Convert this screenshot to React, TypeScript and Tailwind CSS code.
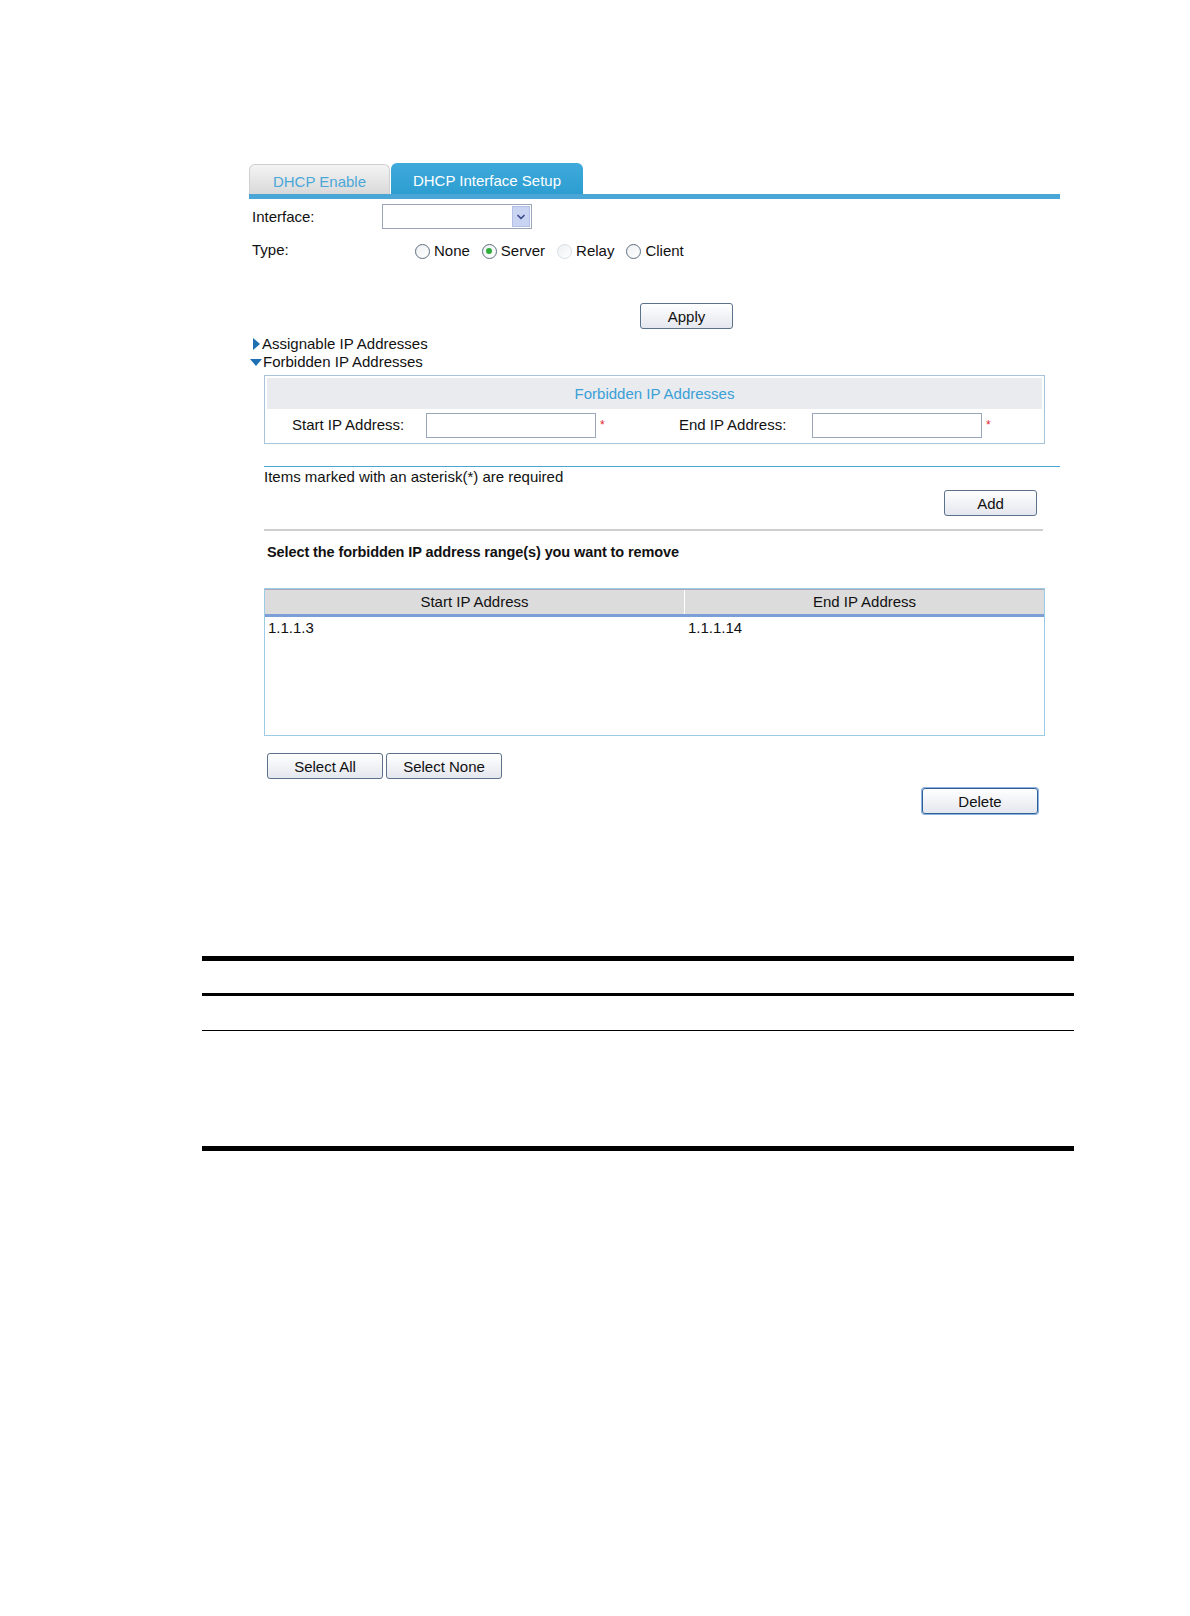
import { ChevronDown } from 'lucide-react';

function Btn({ label, w, focus }: { label: string; w: string; focus?: boolean }) {
  return (
    <button
      className={`${w} h-[26px] rounded-[3px] border bg-gradient-to-b from-white to-[#e4e7ee] text-[15px] leading-none text-[#111] ${
        focus ? 'border-[#2f5f99] ring-1 ring-[#8fb2dc]' : 'border-[#5b718c]'
      }`}
    >
      {label}
    </button>
  );
}

function Radio({ label, checked, disabled }: { label: string; checked?: boolean; disabled?: boolean }) {
  return (
    <label className="flex items-center gap-[4px]">
      <span
        className={`w-[15px] h-[15px] rounded-full border flex items-center justify-center bg-gradient-to-br from-[#eef0f3] to-white ${
          disabled ? 'border-[#d9dde2]' : 'border-[#5d6e82]'
        }`}
      >
        {checked && <span className="w-[6px] h-[6px] rounded-full bg-[#2fae3c]" />}
      </span>
      <span>{label}</span>
    </label>
  );
}

export default function App() {
  return (
    <div className="min-h-[1616px] bg-white text-[15px] leading-[18px] text-[#111] font-['Liberation_Sans',Arial,sans-serif]">
      <div className="ml-[249px] w-[811px] pt-[163px]">
        {/* tabs */}
        <div className="flex items-end h-[36px] border-b-[5px] border-[#4aa6d6]">
          <div className="w-[141px] h-[30px] pt-[5px] rounded-t-[6px] border border-b-0 border-[#cfcfcf] bg-gradient-to-b from-[#f4f4f4] to-[#d9d9d9] flex items-center justify-center text-[#4aa8d8]">
            DHCP Enable
          </div>
          <div className="ml-[1px] w-[192px] h-[31px] pt-[5px] rounded-t-[6px] bg-gradient-to-b from-[#3eaadb] to-[#2d9dd1] flex items-center justify-center text-white">
            DHCP Interface Setup
          </div>
        </div>

        {/* interface / type */}
        <div className="flex items-center mt-[5px] h-[25px]">
          <span className="w-[133px] pl-[3px]">Interface:</span>
          <div className="w-[150px] h-[25px] border border-[#9aa7b8] bg-white flex justify-end items-center pr-[1px]">
            <div className="w-[18px] h-[21px] bg-[#c9d3f2] border border-[#b3bfe6] flex items-center justify-center">
              <ChevronDown className="w-[12px] h-[12px] text-[#3d4d8f]" strokeWidth={3.5} />
            </div>
          </div>
        </div>
        <div className="flex items-center mt-[10px] h-[24px]">
          <span className="w-[166px] pl-[3px] -mt-[3px]">Type:</span>
          <div className="flex items-center gap-[12px]">
            <Radio label="None" />
            <Radio label="Server" checked />
            <Radio label="Relay" disabled />
            <Radio label="Client" />
          </div>
        </div>

        <div className="flex mt-[40px] pl-[391px]">
          <Btn label="Apply" w="w-[93px]" />
        </div>

        {/* sections */}
        <div className="mt-[6px]">
          <div className="flex items-center">
            <span className="w-0 h-0 border-y-[6px] border-y-transparent border-l-[7px] border-l-[#1f6fb5] mr-[2px] ml-[4px]" />
            Assignable IP Addresses
          </div>
          <div className="flex items-center">
            <span className="w-0 h-0 border-x-[6px] border-x-transparent border-t-[7px] border-t-[#1f6fb5] mr-[1px] ml-[1px]" />
            Forbidden IP Addresses
          </div>
        </div>

        <div className="ml-[15px] mt-[4px] w-[781px] border border-[#a7c4dc] p-[2px]">
          <div className="h-[31px] bg-[#e9ebef] flex items-center justify-center text-[#3aa0d6]">
            Forbidden IP Addresses
          </div>
          <div className="flex items-center h-[32px] pl-[25px]">
            <span className="w-[134px]">Start IP Address:</span>
            <div className="w-[170px] h-[25px] border border-[#9aa7b8]" />
            <span className="ml-[4px] w-[8px] text-[#e0242b] text-[12px]">*</span>
            <span className="ml-[71px] w-[133px]">End IP Address:</span>
            <div className="w-[170px] h-[25px] border border-[#9aa7b8]" />
            <span className="ml-[4px] text-[#e0242b] text-[12px]">*</span>
          </div>
        </div>

        <div className="ml-[15px] mt-[22px] border-t border-[#4aa6d6] pt-[1px]">Items marked with an asterisk(*) are required</div>
        <div className="flex justify-end pr-[23px] mt-[4px]">
          <Btn label="Add" w="w-[93px]" />
        </div>
        <div className="ml-[15px] mr-[17px] mt-[13px] border-t-2 border-[#cfcfcf]" />

        <div className="ml-[18px] mt-[12px] font-bold text-[14.5px] tracking-[-0.1px]">
          Select the forbidden IP address range(s) you want to remove
        </div>

        <div className="ml-[15px] mt-[27px] w-[781px] h-[148px] border border-[#9ccbe6]">
          <div className="flex h-[28px] bg-[#dcdcdc] border-b-[3px] border-[#7b9fd6] border-t border-t-[#a9a9b8]">
            <div className="w-[420px] flex items-center justify-center border-r border-white">Start IP Address</div>
            <div className="flex-1 flex items-center justify-center">End IP Address</div>
          </div>
          <div className="flex pt-[2px]">
            <div className="w-[420px] pl-[3px]">1.1.1.3</div>
            <div className="pl-[3px]">1.1.1.14</div>
          </div>
        </div>

        <div className="flex gap-[3px] ml-[18px] mt-[17px]">
          <Btn label="Select All" w="w-[116px]" />
          <Btn label="Select None" w="w-[116px]" />
        </div>
        <div className="flex justify-end pr-[22px] mt-[9px]">
          <Btn label="Delete" w="w-[116px]" focus />
        </div>
      </div>

      {/* table rules below */}
      <div className="ml-[202px] w-[872px] mt-[142px]">
        <div className="border-t-[5px] border-black" />
        <div className="mt-[32px] border-t-[3px] border-black" />
        <div className="mt-[34px] border-t border-black" />
        <div className="mt-[115px] border-t-[5px] border-black" />
      </div>
    </div>
  );
}
